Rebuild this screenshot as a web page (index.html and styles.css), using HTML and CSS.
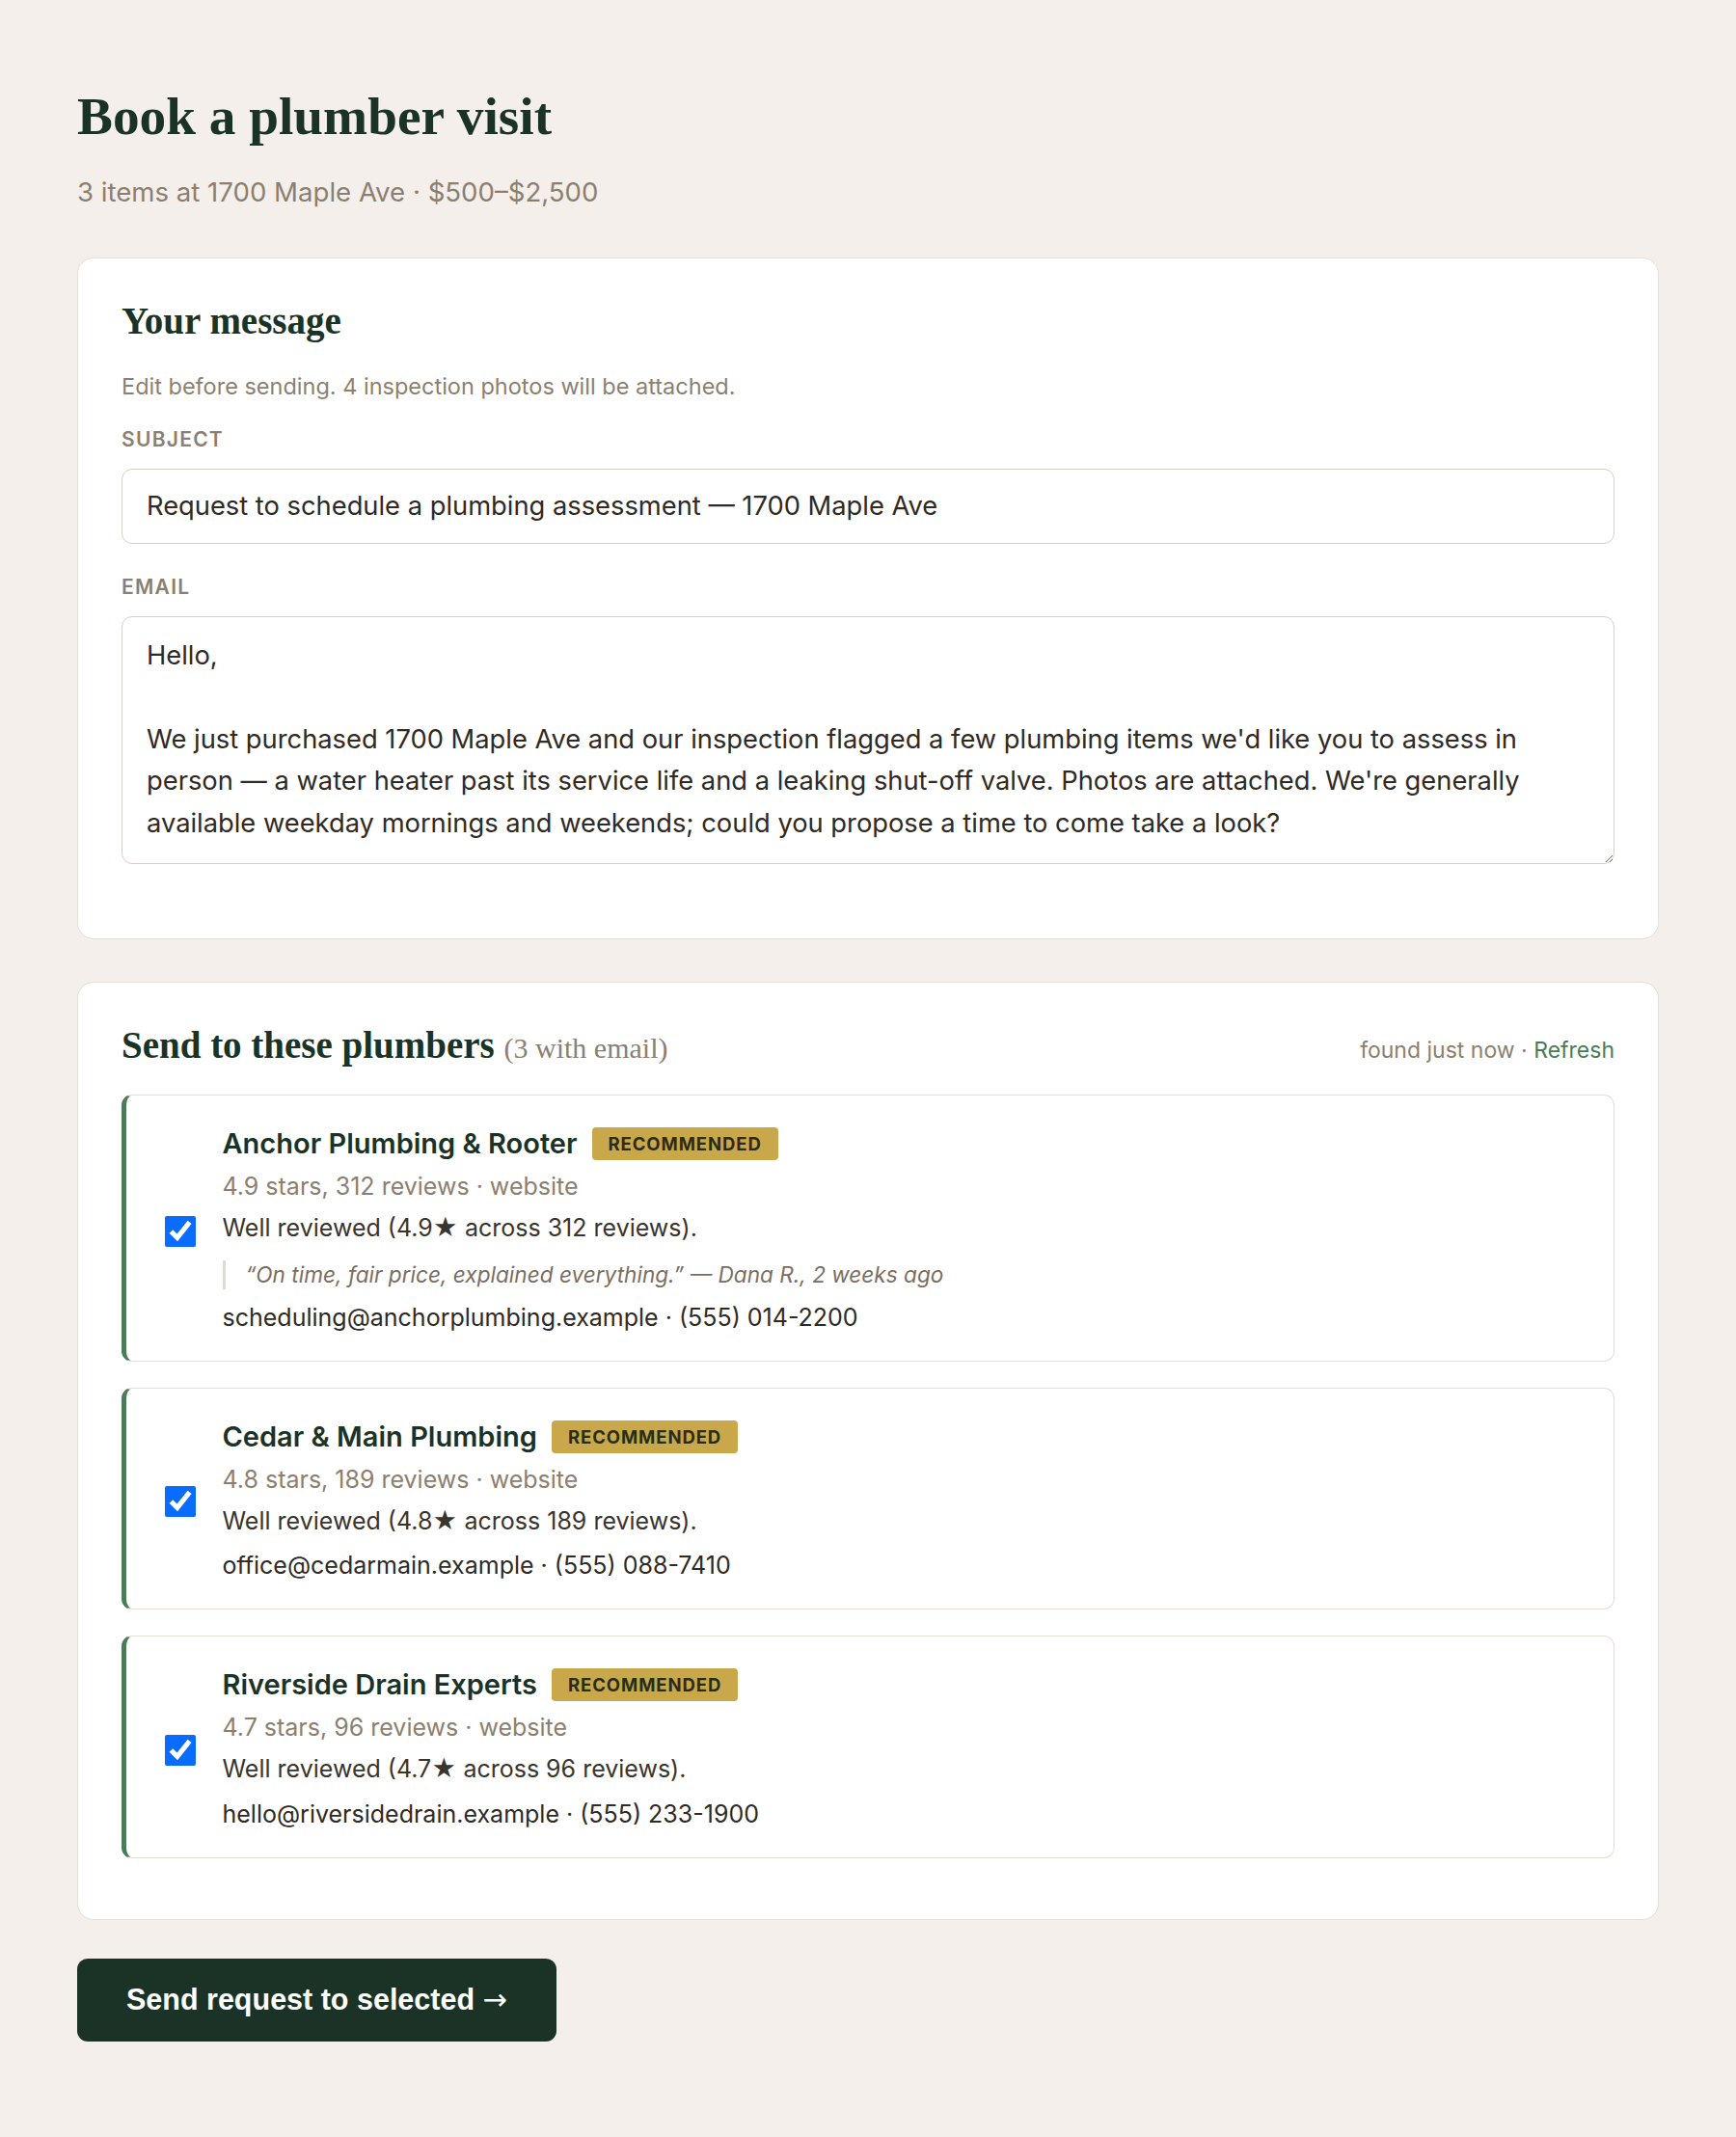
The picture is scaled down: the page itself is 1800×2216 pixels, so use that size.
FILE: index.html
```html
<!DOCTYPE html>
<html lang="en">
<head>
  <meta charset="UTF-8">
  <title>Book a plumber visit</title>
  <link rel="stylesheet" href="styles.css">
</head>
<body>
  <main class="page">
    <header class="page-head">
      <h1>Book a plumber visit</h1>
      <p class="summary">3 items at 1700 Maple Ave · $500–$2,500</p>
    </header>

    <section class="card message-card">
      <h2>Your message</h2>
      <p class="hint">Edit before sending. 4 inspection photos will be attached.</p>

      <label class="field-label" for="subject">Subject</label>
      <input id="subject" class="text-input" type="text" value="Request to schedule a plumbing assessment — 1700 Maple Ave">

      <label class="field-label" for="body">Email</label>
      <textarea id="body" class="text-area">Hello,

We just purchased 1700 Maple Ave and our inspection flagged a few plumbing items we'd like you to assess in person — a water heater past its service life and a leaking shut-off valve. Photos are attached. We're generally available weekday mornings and weekends; could you propose a time to come take a look?</textarea>
    </section>

    <section class="card list-card">
      <div class="list-head">
        <h2>Send to these plumbers <span class="count">(3 with email)</span></h2>
        <p class="found">found just now · <a href="#">Refresh</a></p>
      </div>

      <div class="plumbers">
        <label class="plumber">
          <input class="pick" type="checkbox" checked>
          <div class="plumber-info">
            <div class="name-row">
              <span class="name">Anchor Plumbing &amp; Rooter</span>
              <span class="badge">Recommended</span>
            </div>
            <div class="meta">4.9 stars, 312 reviews · website</div>
            <div class="reason">Well reviewed (4.9★ across 312 reviews).</div>
            <div class="quote">“On time, fair price, explained everything.” — Dana R., 2 weeks ago</div>
            <div class="contact">scheduling@anchorplumbing.example · (555) 014-2200</div>
          </div>
        </label>

        <label class="plumber">
          <input class="pick" type="checkbox" checked>
          <div class="plumber-info">
            <div class="name-row">
              <span class="name">Cedar &amp; Main Plumbing</span>
              <span class="badge">Recommended</span>
            </div>
            <div class="meta">4.8 stars, 189 reviews · website</div>
            <div class="reason">Well reviewed (4.8★ across 189 reviews).</div>
            <div class="contact">office@cedarmain.example · (555) 088-7410</div>
          </div>
        </label>

        <label class="plumber">
          <input class="pick" type="checkbox" checked>
          <div class="plumber-info">
            <div class="name-row">
              <span class="name">Riverside Drain Experts</span>
              <span class="badge">Recommended</span>
            </div>
            <div class="meta">4.7 stars, 96 reviews · website</div>
            <div class="reason">Well reviewed (4.7★ across 96 reviews).</div>
            <div class="contact">hello@riversidedrain.example · (555) 233-1900</div>
          </div>
        </label>
      </div>
    </section>

    <button class="send" type="button">Send request to selected <span class="arrow">→</span></button>
  </main>
</body>
</html>
```

FILE: styles.css
```css
body {
  margin: 0;
  background: #f4efea;
  font-family: Inter, "DejaVu Sans", sans-serif;
  color: #3a342e;
}

.page {
  padding: 88px 80px 60px;
}

h1 {
  margin: 0;
  font-family: "Liberation Serif", serif;
  font-weight: 700;
  font-size: 55.3px;
  line-height: 66px;
  color: #1b3326;
}

.summary {
  margin: 28px 0 0;
  font-size: 27.6px;
  line-height: 34px;
  color: #8c7f70;
}

.card {
  margin-top: 51px;
  padding: 42px 45px 45px;
  background: #ffffff;
  border: 1.5px solid #e7dfd6;
  border-radius: 17px;
}

.card + .card {
  margin-top: 44px;
}

h2 {
  margin: 0;
  font-family: "Liberation Serif", serif;
  font-weight: 700;
  font-size: 39px;
  line-height: 45.6px;
  color: #1b3326;
}

.hint {
  margin: 30px 0 0;
  font-size: 23.5px;
  line-height: 30px;
  color: #8c7f70;
}

.field-label {
  display: block;
  margin: 27px 0 17px;
  font-size: 21px;
  line-height: 26px;
  font-weight: 600;
  letter-spacing: 0.06em;
  text-transform: uppercase;
  color: #8c7f70;
}

.text-input + .field-label {
  margin-top: 32px;
}

.text-input,
.text-area {
  display: block;
  width: 100%;
  box-sizing: border-box;
  font-family: inherit;
  font-size: 27.3px;
  color: #2f2a25;
  background: #ffffff;
  border: 1.5px solid #dad0c5;
  border-radius: 11px;
  outline: none;
}

.text-input {
  height: 78px;
  padding: 0 25px;
}

.text-area {
  height: 257px;
  padding: 18px 25px;
  line-height: 43.5px;
  resize: vertical;
  margin-bottom: 32px;
}

/* plumber list */

.list-head {
  display: flex;
  justify-content: space-between;
  align-items: baseline;
}

.count {
  font-weight: 400;
  font-size: 30px;
  color: #8c7f70;
}

.found {
  margin: 0;
  font-size: 23px;
  color: #8c7f70;
}

.found a {
  color: #4a7c59;
  text-decoration: none;
}

.plumbers {
  display: flex;
  flex-direction: column;
  gap: 27px;
  margin: 26px 0 18px;
}

.plumber {
  display: flex;
  align-items: center;
  gap: 28px;
  padding: 30px 30px 23px 39.5px;
  border: 1.5px solid #e7dfd6;
  border-left: 5.5px solid #4a7c59;
  border-radius: 11px;
  cursor: pointer;
}

.pick {
  flex: none;
  width: 32px;
  height: 32px;
  margin: 0;
  accent-color: #0a6cff;
}

.name-row {
  display: flex;
  align-items: center;
  gap: 15px;
  line-height: 40px;
  margin-bottom: 3px;
}

.name {
  font-size: 29px;
  font-weight: 600;
  color: #1b3326;
}

.badge {
  height: 34px;
  padding: 0 17px;
  line-height: 34px;
  font-size: 18.5px;
  font-weight: 700;
  letter-spacing: 0.05em;
  text-transform: uppercase;
  color: #2a2c1c;
  background: #c8a84b;
  border-radius: 4px;
}

.meta,
.reason,
.contact {
  font-size: 25px;
  line-height: 43px;
}

.meta {
  color: #8c7f70;
}

.reason {
  color: #3a342e;
}

.quote {
  margin: 11.5px 0 8px;
  padding-left: 21px;
  border-left: 3px solid #e3dbd2;
  font-style: italic;
  font-size: 22.6px;
  line-height: 30px;
  color: #7a6e62;
}

.contact {
  margin-top: 3.5px;
  color: #2f2a25;
}

.send {
  margin-top: 40px;
  height: 86px;
  padding: 0 51px;
  font-family: "Liberation Sans", Arial, sans-serif;
  font-weight: 700;
  font-size: 30.5px;
  color: #ffffff;
  background: #1b3326;
  border: none;
  border-radius: 11px;
  cursor: pointer;
}

.arrow {
  font-family: "DejaVu Sans", sans-serif;
  font-weight: 400;
}
```
